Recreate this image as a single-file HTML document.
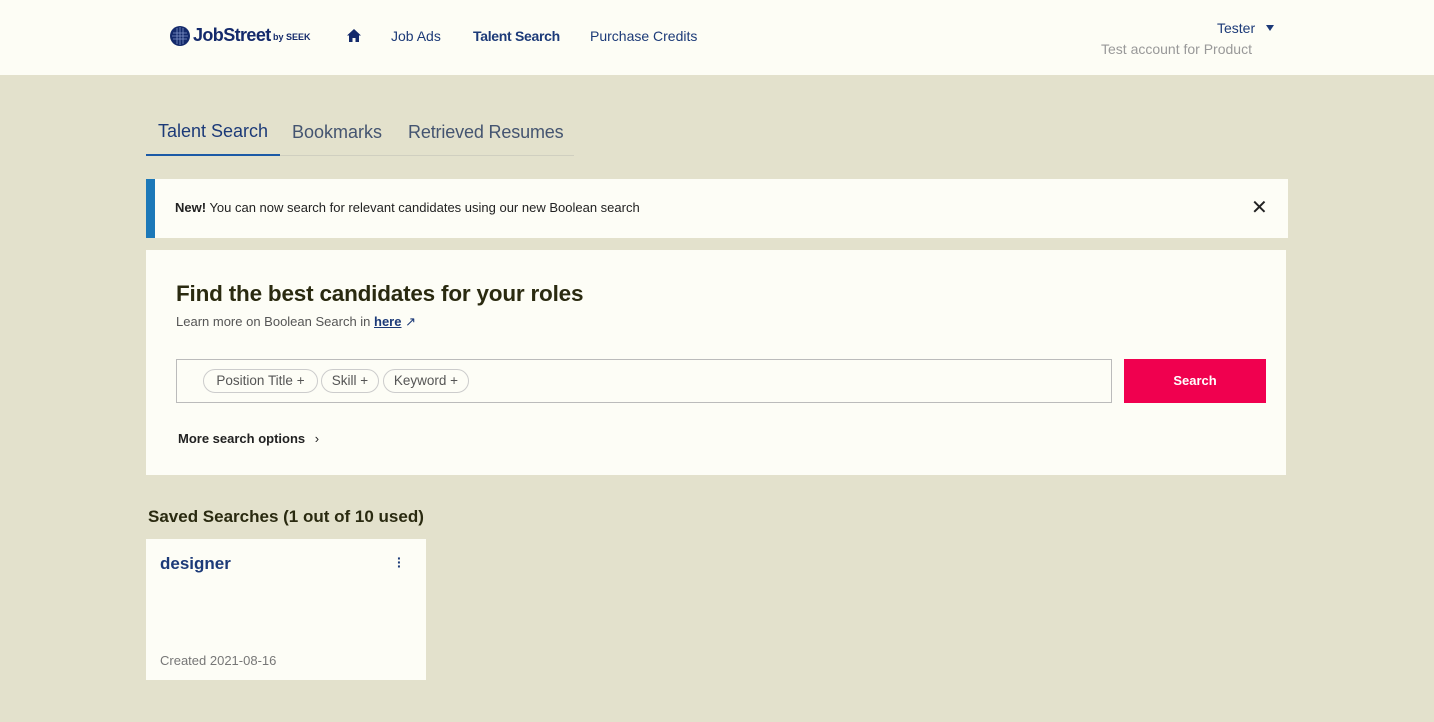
<!DOCTYPE html>
<html><head><meta charset="utf-8"><style>
*{box-sizing:border-box;margin:0;padding:0}
body{width:1434px;height:722px;overflow:hidden;background:#e3e1cc;font-family:"Liberation Sans",Arial,sans-serif;position:relative}
.abs{position:absolute}
.hdr{left:0;top:0;width:1434px;height:75px;background:#fdfdf5}
.nav{font-size:14px;color:#1c3a78;top:28px}
.card{background:#fdfdf6}
.pill{top:369px;height:24px;border:1px solid #ccc;border-radius:12px;font-size:13.5px;line-height:22px;color:#555;text-align:center}
</style></head><body>
<div class="abs hdr"></div>
<svg class="abs" style="left:169px;top:25px" width="22" height="22" viewBox="0 0 22 22"><circle cx="11" cy="11" r="10" fill="#142a6b"/><path d="M4 8H18M3 11H19M4 14H18M8 3V19M11 2V20M14 3V19" stroke="#7f93c9" stroke-width="0.8"/></svg>
<div class="abs" style="left:193px;top:25px;font-size:18px;font-weight:bold;color:#142a6b;letter-spacing:-0.6px">JobStreet</div>
<div class="abs" style="left:273px;top:32px;font-size:9px;font-weight:bold;color:#142a6b">by SEEK</div>
<svg class="abs" style="left:347px;top:29px" width="14" height="13" viewBox="0 0 14 13"><path d="M7 0L0 6.5H2V13H5.5V9H8.5V13H12V6.5H14Z" fill="#142a6b"/></svg>
<div class="abs nav" style="left:391px">Job Ads</div>
<div class="abs nav" style="left:473px;font-weight:bold;letter-spacing:-0.3px">Talent Search</div>
<div class="abs nav" style="left:590px">Purchase Credits</div>
<div class="abs" style="left:1217px;top:20px;font-size:14px;color:#1c3a78">Tester</div>
<div class="abs" style="left:1266px;top:25px;width:0;height:0;border-left:4px solid transparent;border-right:4px solid transparent;border-top:6px solid #1c3a78"></div>
<div class="abs" style="left:1101px;top:41px;font-size:14px;color:#999">Test account for Product</div>

<div class="abs" style="left:158px;top:121px;font-size:18px;color:#1c3a78">Talent Search</div>
<div class="abs" style="left:292px;top:122px;font-size:18px;color:#445470">Bookmarks</div>
<div class="abs" style="left:408px;top:122px;font-size:18px;color:#445470;letter-spacing:-0.15px">Retrieved Resumes</div>
<div class="abs" style="left:146px;top:155px;width:428px;height:1px;background:#d0cfc0"></div>
<div class="abs" style="left:146px;top:154px;width:134px;height:2px;background:#1c5aa6"></div>

<div class="abs card" style="left:146px;top:179px;width:1142px;height:59px"></div>
<div class="abs" style="left:146px;top:179px;width:9px;height:59px;background:#1c78b8"></div>
<div class="abs" style="left:175px;top:200px;font-size:13px;color:#222"><b>New!</b> You can now search for relevant candidates using our new Boolean search</div>
<div class="abs" style="left:1251px;top:198px;font-size:20px;color:#222;line-height:20px">✕</div>

<div class="abs card" style="left:146px;top:250px;width:1140px;height:225px"></div>
<div class="abs" style="left:176px;top:281px;font-size:22.5px;font-weight:bold;color:#2a2a10;letter-spacing:-0.2px">Find the best candidates for your roles</div>
<div class="abs" style="left:176px;top:314px;font-size:13px;color:#555">Learn more on Boolean Search in <b style="color:#1c3a78;text-decoration:underline">here</b> <span style="color:#1c3a78">↗</span></div>
<div class="abs" style="left:176px;top:359px;width:936px;height:44px;border:1px solid #bbb"></div>
<div class="abs pill" style="left:203px;width:115px">Position Title +</div>
<div class="abs pill" style="left:321px;width:58px">Skill +</div>
<div class="abs pill" style="left:383px;width:86px">Keyword +</div>
<div class="abs" style="left:1124px;top:359px;width:142px;height:44px;background:#f0004f;color:#fff;font-size:13px;font-weight:bold;text-align:center;line-height:44px">Search</div>
<div class="abs" style="left:178px;top:431px;font-size:13px;font-weight:bold;color:#222">More search options <span style="font-weight:normal;margin-left:6px">›</span></div>

<div class="abs" style="left:148px;top:507px;font-size:17px;font-weight:bold;color:#2a2a10">Saved Searches (1 out of 10 used)</div>
<div class="abs card" style="left:146px;top:539px;width:280px;height:141px"></div>
<div class="abs" style="left:160px;top:554px;font-size:17px;font-weight:bold;color:#1c3a78">designer</div>
<div class="abs" style="left:397px;top:556px;font-size:14px;font-weight:bold;color:#1c3a78;line-height:4px">·<br>·<br>·</div>
<div class="abs" style="left:160px;top:653px;font-size:13px;color:#777">Created 2021-08-16</div>
</body></html>
